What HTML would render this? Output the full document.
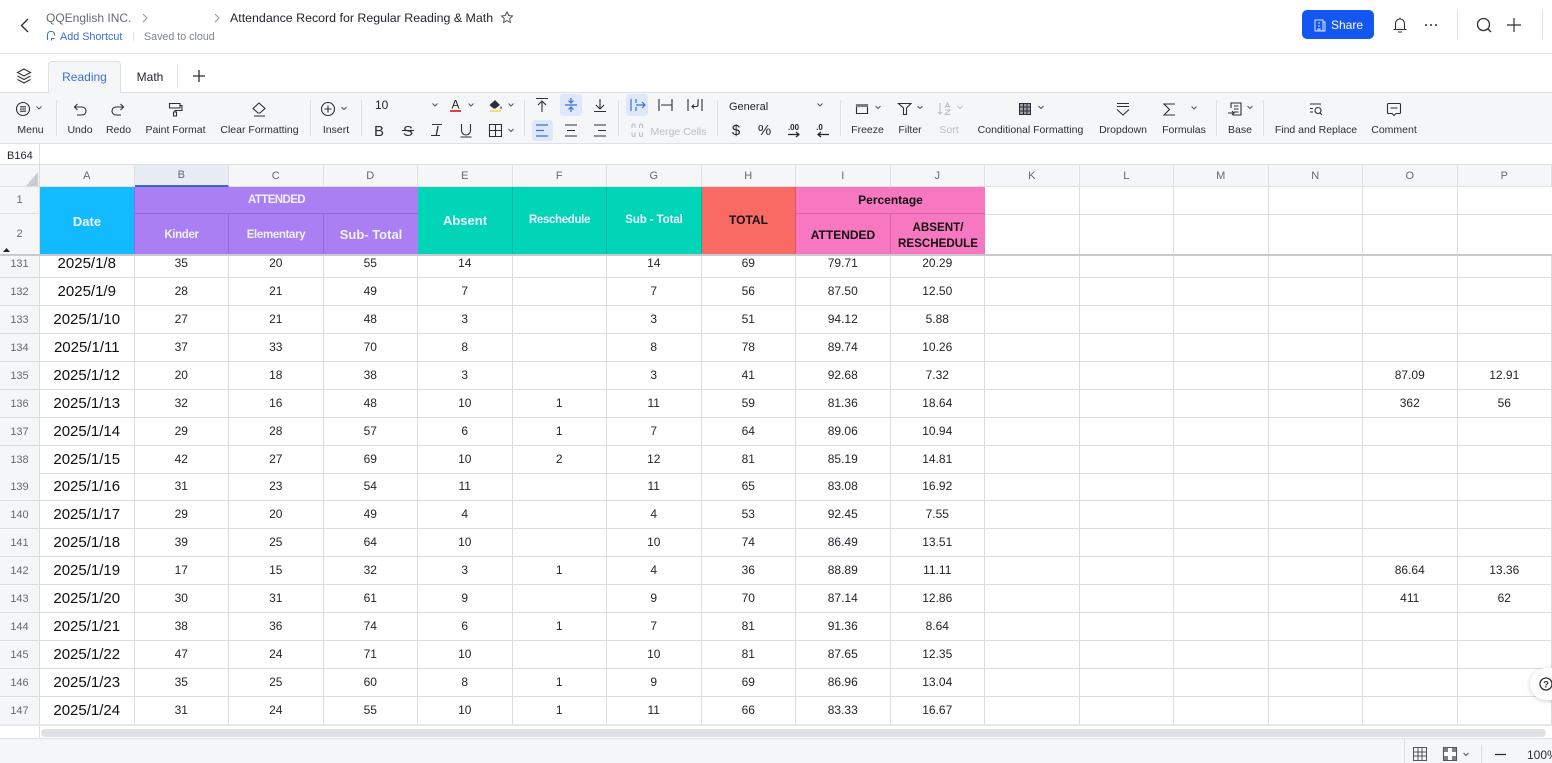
<!DOCTYPE html>
<html lang="en"><head><meta charset="utf-8"><title>Attendance Record</title>
<style>
*{box-sizing:border-box;margin:0;padding:0}
html,body{width:1552px;height:763px;overflow:hidden;background:#fff;font-family:"Liberation Sans",sans-serif}
#chrome{position:absolute;left:0;top:0;z-index:5}
#chrome text{font-family:"Liberation Sans",sans-serif}
.l{font-size:10.500px;fill:#2b2f36;text-anchor:middle}
.g{fill:#bbbfc4}
.ic{fill:none;stroke:#2b2f36;stroke-width:1.1}
.c{fill:none;stroke:#51565d;stroke-width:1}
.b{fill:none;stroke:#3b6fd1;stroke-width:1.2}
.x{fill:none;stroke:#bbbfc4;stroke-width:1.1}
.sep{stroke:#dee0e3;stroke-width:1}
.box{position:absolute}
.flex{display:flex;position:absolute;left:0}
.flex span{display:flex;align-items:center;justify-content:center;flex:none;width:94.5px}
.flex span.n{width:40px}
#colh{top:164px;height:23px;background:#f5f6f7;border-top:1px solid #dee0e3;border-bottom:1px solid #dee0e3;width:1552px}
#colh span{font-size:11px;color:#646a73;border-right:1px solid #dee0e3;height:21px}
#colh span.sel{background:#e8ecf5;border-bottom:2px solid #3b66c4;height:22px;padding-bottom:1px}
#body{position:absolute;left:0;top:256px;width:1552px;height:469px;overflow:hidden}
.r{display:flex;position:absolute;left:0;height:28px;width:1552px;margin-top:-256px;font-size:12px;color:#1f2329}
.r span{display:flex;align-items:center;justify-content:center;flex:none;width:94.5px;height:28px;padding-bottom:1px;border-right:1px solid #dadce0;border-bottom:1px solid #dadce0}
.r span.n{width:40px;background:#f5f6f7;color:#646a73;font-size:11px;padding-bottom:0}
.r span.d{font-size:15px;color:#111;padding-bottom:1px}
.h{position:absolute;display:flex;align-items:center;justify-content:center;text-align:center;font-size:11.500px;letter-spacing:-.35px;font-weight:bold;color:#eef2ff}
.k{color:#111;line-height:16px;font-size:12px;letter-spacing:0}
.rn{position:absolute;left:0;width:39px;text-align:center;font-size:11px;color:#646a73;background:#f5f6f7;border-bottom:1px solid #dee0e3}
.vl{position:absolute;width:1px;background:#dadce0}
</style></head><body>

<div class="box" style="left:0;top:92px;width:1552px;height:52px;background:#f5f6f7;border-top:1px solid #dee0e3;border-bottom:1px solid #dee0e3"></div>
<div class="box" style="left:0;top:53px;width:1552px;height:1px;background:#dee0e3"></div>
<div class="box" style="left:48px;top:61px;width:73px;height:32px;background:#f5f6f7;border:1px solid #dee0e3;border-bottom:none;border-radius:4px 4px 0 0"></div>
<div class="box" style="left:39px;top:144px;width:1px;height:21px;background:#dee0e3"></div>

<svg id="chrome" width="1552" height="144" viewBox="0 0 1552 144" xmlns="http://www.w3.org/2000/svg">
<path d="M28 19l-6.500 6.500 6.500 6.500" fill="none" stroke="#2b2f36" stroke-width="1.400"/>
<text x="46" y="22" font-size="12" fill="#646a73">QQEnglish INC.</text>
<path class="c" d="M143 14l4 4-4 4M215 14l4 4-4 4" style="stroke:#8f959e"/>
<text x="230" y="22" font-size="12.400" fill="#1f2329">Attendance Record for Regular Reading &amp; Math</text>
<path d="M507 12l1.700 3.500 3.800.5-2.800 2.600.7 3.800-3.400-1.800-3.400 1.800.7-3.800-2.800-2.600 3.800-.5z" fill="none" stroke="#51565d" stroke-width="1"/>
<path d="M47.500 40v-5.500a3 3 0 0 1 3-3h1a3 3 0 0 1 3 3v1M54.500 38.500h-3v2" fill="none" stroke="#3b6fd1" stroke-width="1.100"/>
<text x="60" y="40" font-size="10.800" fill="#3b6fd1">Add Shortcut</text>
<path class="sep" d="M133.500 32v9"/>
<text x="144" y="40" font-size="10.700" fill="#7f858e">Saved to cloud</text>

<rect x="1302" y="10" width="72" height="29" rx="5" fill="#1456f0"/>
<path d="M1315 20h8v11h-8zM1323 22h2v9h-2M1318 23h2M1318 26h2M1318 31v-2h2v2" fill="none" stroke="#dce6ff" stroke-width="1"/>
<text x="1331" y="29" font-size="12" fill="#fff" style="font-weight:500">Share</text>
<path class="ic" d="M1393.500 29.500h13M1395.500 29.500v-6a4.500 4.500 0 0 1 9 0v6M1398 32h4M1400 17.500v1.500"/>
<path d="M1425 25h2M1430 25h2M1435 25h2" stroke="#2b2f36" stroke-width="1.600" fill="none"/>
<path class="sep" d="M1457.500 10v29M1542.500 10v29"/>
<circle class="ic" cx="1483.500" cy="24.500" r="6" style="stroke-width:1.300"/><path class="ic" d="M1488 29l3 3" style="stroke-width:1.300"/>
<path class="ic" d="M1514 18v14M1507 25h14" style="stroke-width:1.200"/>

<path class="ic" d="M24 69l-6.500 3.500 6.500 3.500 6.500-3.500zM17.500 76l6.500 3.500 6.500-3.500M17.500 79.500l6.500 3.500 6.500-3.500"/>
<text x="84.500" y="81" font-size="12" fill="#3b6fd1" text-anchor="middle">Reading</text>
<text x="150" y="81" font-size="12" fill="#1f2329" text-anchor="middle">Math</text>
<path class="sep" d="M177.500 65v22"/>
<path class="ic" d="M199 70v12M193 76h12" style="stroke-width:1.300"/>

<path class="sep" d="M56.500 100v36M310.500 100v36M361.500 100v36M524.500 100v36M618.500 100v36M717.500 100v36M840.500 100v36M1216.500 100v36M1263.500 100v36"/>

<text class="l" x="30.500" y="133">Menu</text><text class="l" x="80" y="133">Undo</text><text class="l" x="118.500" y="133">Redo</text>
<text class="l" x="175.500" y="133">Paint Format</text><text class="l" x="259.500" y="133">Clear Formatting</text><text class="l" x="336" y="133">Insert</text>
<text class="l g" x="678.500" y="135">Merge Cells</text>
<text class="l" x="867.500" y="133">Freeze</text><text class="l" x="910" y="133">Filter</text><text class="l g" x="949" y="133">Sort</text>
<text class="l" x="1030.500" y="133">Conditional Formatting</text><text class="l" x="1123" y="133">Dropdown</text><text class="l" x="1184" y="133">Formulas</text>
<text class="l" x="1240" y="133">Base</text><text class="l" x="1316" y="133">Find and Replace</text><text class="l" x="1394" y="133">Comment</text>

<circle class="ic" cx="23" cy="109" r="6.500"/><path class="ic" d="M20 106.800h6M20 109h6M20 111.200h6"/>
<path class="c" d="M36.500 106.500l2.500 2.500 2.500-2.500"/>
<path class="ic" d="M77.500 104l-3 3 3 3M74.500 107h7.500a4 4 0 0 1 0 8h-5"/>
<path class="ic" d="M120.500 104l3 3-3 3M123.500 107h-7.500a4 4 0 0 0 0 8h5"/>
<path class="ic" d="M169.500 103.500h10.500v4.500h-10.500zM180 105.500h2v5h-7v1.500M173.500 112h3v4h-3z"/>
<path class="ic" d="M259 103l6 5.500-5 4.500h-2l-5-4.500zM254 116h11"/>
<circle class="ic" cx="328" cy="109" r="6.500"/><path class="ic" d="M328 105.500v7M324.500 109h7"/>
<path class="c" d="M341.500 107l2.500 2.500 2.500-2.500"/>

<text x="375" y="109" font-size="12" fill="#1f2329">10</text>
<path class="c" d="M432.500 103.500l2.500 2.500 2.500-2.500M468.500 103.500l2.500 2.500 2.500-2.500M508.500 103.500l2.500 2.500 2.500-2.500"/>
<text x="455.500" y="108.500" font-size="12" fill="#1f2329" text-anchor="middle">A</text>
<rect x="450" y="110" width="11" height="2" fill="#e0403a"/>
<path d="M495 100l5 5-4.500 3.500h-2L489.500 105l4-3.500zM501 106l1 2.500h-2z" fill="#2b2f36"/>
<rect x="490" y="110" width="11" height="2" fill="#f2de75"/>

<text x="379" y="136" font-size="15" fill="#2b2f36" text-anchor="middle">B</text>
<text x="408" y="136" font-size="15" fill="#2b2f36" text-anchor="middle">S</text><path class="ic" d="M402 130.500h12"/>
<text x="437" y="135.500" font-size="14" fill="#2b2f36" text-anchor="middle" font-style="italic">I</text><path class="ic" d="M432 124.500h10M431 135.500h9"/>
<path class="ic" d="M461.500 124v6.500a4.500 4.500 0 0 0 9 0V124M460.500 137h11"/>
<path class="ic" d="M489.500 124.500h12v12h-12zM495.500 124.500v12M489.500 130.500h12"/>
<path class="c" d="M508.500 129l2.500 2.500 2.500-2.500"/>

<rect x="560" y="94" width="22" height="22" rx="3" fill="#dfe8fa"/>
<rect x="532" y="120" width="21" height="21" rx="3" fill="#dfe8fa"/>
<rect x="626" y="94" width="22" height="22" rx="3" fill="#dfe8fa"/>
<path class="ic" d="M536 98.500h12M542 112v-11M538 105l4-4 4 4"/>
<path class="b" d="M565 105h12M571 98v5M568.500 100.500l2.500 2.500 2.500-2.500M571 112v-5M568.500 109.500l2.500-2.500 2.500 2.500"/>
<path class="ic" d="M594 111.500h12M600 99v10M596 105l4 4 4-4"/>
<path class="b" d="M536 125h12M536 130.500h8M536 136h12"/>
<path class="ic" d="M565 125h12M567 130.500h8M565 136h12"/>
<path class="ic" d="M594 125h12M598 130.500h8M594 136h12"/>

<path class="b" d="M631 99v12M636 99v4M636 107v4M636 105h9M642 102l3 3-3 3"/>
<path class="ic" d="M659 99v12M672 99v12M661 105h11"/>
<path class="ic" d="M688 99v12M702 99v12M699 100h-1v5a1.500 1.500 0 0 1-1.500 1.500h-4M694 104.500l-2 2 2 2"/>
<path class="x" d="M632 128v-2.500a1.500 1.500 0 0 1 3 0v2.500M639.500 128v-2.500a1.500 1.500 0 0 1 3 0v2.500M632 132.500v2.500a1.500 1.500 0 0 0 3 0v-2.500M639.500 132.500v2.500a1.500 1.500 0 0 0 3 0v-2.500"/>

<text x="729" y="110" font-size="11" fill="#1f2329">General</text>
<path class="c" d="M817.500 103.500l2.500 2.500 2.500-2.500"/>
<text x="736" y="135" font-size="15" fill="#1f2329" text-anchor="middle">$</text>
<text x="764.500" y="135" font-size="15" fill="#1f2329" text-anchor="middle">%</text>
<text x="793.500" y="130" font-size="8" font-weight="bold" fill="#1f2329" text-anchor="middle">.00</text>
<path d="M788 134.500h11M796 132l3 2.500-3 2.500" fill="none" stroke="#1f2329" stroke-width="1.200"/>
<text x="819.500" y="130" font-size="8" font-weight="bold" fill="#1f2329" text-anchor="middle">.0</text>
<path d="M829 134.500h-11M821 132l-3 2.500 3 2.500" fill="none" stroke="#1f2329" stroke-width="1.200"/>

<path class="ic" d="M856.500 104.500h11v9h-11z"/><path d="M856 104h12v3h-12z" fill="#777b82"/>
<path class="c" d="M875.500 106l2.500 2.500 2.500-2.500"/>
<path class="ic" d="M898.500 103.500h12.500l-4.500 4.500v6.500h-3V108z"/>
<path class="c" d="M917.500 106l2.500 2.500 2.500-2.500"/>
<path class="x" d="M940 103v11M938 112l2 2 2-2M945 108l2.500-5 2.500 5M946 106.500h3M945 110h5l-5 4.500h5"/>
<path class="x" d="M957.500 106l2.500 2.500 2.500-2.500"/>
<rect x="1019.500" y="103.500" width="11" height="11" fill="#9a9da3" stroke="#2b2f36"/><path d="M1023.500 103.500v11M1027 103.500v11M1019.500 107h11M1019.500 111h11" fill="none" stroke="#2b2f36" stroke-width="1"/>
<path class="c" d="M1038.500 106l2.500 2.500 2.500-2.500"/>
<path class="ic" d="M1117 103.500h12M1117 106.500h12M1117 109.500l6 5.500 6-5.500"/>
<path class="ic" d="M1175 104h-11l5.500 5.500-5.500 5.500h11"/>
<path class="c" d="M1191.500 106.500l2.500 2.500 2.500-2.500"/>
<path class="ic" d="M1231 108v-5h10v12h-8M1234 106h4.500M1234 109h4.500M1234 112h4.500M1228 113h6M1232 111l2 2-2 2"/>
<path class="c" d="M1247.500 106l2.500 2.500 2.500-2.500"/>
<path class="ic" d="M1310 104h11M1310 108.500h3M1310 112h3"/><circle class="ic" cx="1318" cy="110.500" r="3"/><path class="ic" d="M1320 113l2 2"/>
<path class="ic" d="M1388.500 103.500h11a1 1 0 0 1 1 1v8a1 1 0 0 1-1 1h-3.500l-2 2-2-2h-3.500a1 1 0 0 1-1-1v-8a1 1 0 0 1 1-1zM1390.500 108h7"/>
</svg>

<div class="box" style="left:7px;top:150px;font-size:11px;line-height:12px;color:#1f2329">B164</div>

<div class="flex" id="colh"><span class="n"></span><span>A</span><span class="sel">B</span><span>C</span><span>D</span><span>E</span><span>F</span><span>G</span><span>H</span><span>I</span><span>J</span><span>K</span><span>L</span><span>M</span><span>N</span><span>O</span><span>P</span></div>
<svg class="box" style="left:26px;top:172px" width="12" height="14"><path d="M12 0v14H0z" fill="#c9ccd1"/></svg>

<div id="body">
<div class="r" style="top:250px"><span class="n">131</span><span class="d">2025/1/8</span><span>35</span><span>20</span><span>55</span><span>14</span><span></span><span>14</span><span>69</span><span>79.71</span><span>20.29</span><span></span><span></span><span></span><span></span><span></span><span></span></div>
<div class="r" style="top:278px"><span class="n">132</span><span class="d">2025/1/9</span><span>28</span><span>21</span><span>49</span><span>7</span><span></span><span>7</span><span>56</span><span>87.50</span><span>12.50</span><span></span><span></span><span></span><span></span><span></span><span></span></div>
<div class="r" style="top:306px"><span class="n">133</span><span class="d">2025/1/10</span><span>27</span><span>21</span><span>48</span><span>3</span><span></span><span>3</span><span>51</span><span>94.12</span><span>5.88</span><span></span><span></span><span></span><span></span><span></span><span></span></div>
<div class="r" style="top:334px"><span class="n">134</span><span class="d">2025/1/11</span><span>37</span><span>33</span><span>70</span><span>8</span><span></span><span>8</span><span>78</span><span>89.74</span><span>10.26</span><span></span><span></span><span></span><span></span><span></span><span></span></div>
<div class="r" style="top:362px"><span class="n">135</span><span class="d">2025/1/12</span><span>20</span><span>18</span><span>38</span><span>3</span><span></span><span>3</span><span>41</span><span>92.68</span><span>7.32</span><span></span><span></span><span></span><span></span><span>87.09</span><span>12.91</span></div>
<div class="r" style="top:390px"><span class="n">136</span><span class="d">2025/1/13</span><span>32</span><span>16</span><span>48</span><span>10</span><span>1</span><span>11</span><span>59</span><span>81.36</span><span>18.64</span><span></span><span></span><span></span><span></span><span>362</span><span>56</span></div>
<div class="r" style="top:418px"><span class="n">137</span><span class="d">2025/1/14</span><span>29</span><span>28</span><span>57</span><span>6</span><span>1</span><span>7</span><span>64</span><span>89.06</span><span>10.94</span><span></span><span></span><span></span><span></span><span></span><span></span></div>
<div class="r" style="top:446px"><span class="n">138</span><span class="d">2025/1/15</span><span>42</span><span>27</span><span>69</span><span>10</span><span>2</span><span>12</span><span>81</span><span>85.19</span><span>14.81</span><span></span><span></span><span></span><span></span><span></span><span></span></div>
<div class="r" style="top:473px"><span class="n">139</span><span class="d">2025/1/16</span><span>31</span><span>23</span><span>54</span><span>11</span><span></span><span>11</span><span>65</span><span>83.08</span><span>16.92</span><span></span><span></span><span></span><span></span><span></span><span></span></div>
<div class="r" style="top:501px"><span class="n">140</span><span class="d">2025/1/17</span><span>29</span><span>20</span><span>49</span><span>4</span><span></span><span>4</span><span>53</span><span>92.45</span><span>7.55</span><span></span><span></span><span></span><span></span><span></span><span></span></div>
<div class="r" style="top:529px"><span class="n">141</span><span class="d">2025/1/18</span><span>39</span><span>25</span><span>64</span><span>10</span><span></span><span>10</span><span>74</span><span>86.49</span><span>13.51</span><span></span><span></span><span></span><span></span><span></span><span></span></div>
<div class="r" style="top:557px"><span class="n">142</span><span class="d">2025/1/19</span><span>17</span><span>15</span><span>32</span><span>3</span><span>1</span><span>4</span><span>36</span><span>88.89</span><span>11.11</span><span></span><span></span><span></span><span></span><span>86.64</span><span>13.36</span></div>
<div class="r" style="top:585px"><span class="n">143</span><span class="d">2025/1/20</span><span>30</span><span>31</span><span>61</span><span>9</span><span></span><span>9</span><span>70</span><span>87.14</span><span>12.86</span><span></span><span></span><span></span><span></span><span>411</span><span>62</span></div>
<div class="r" style="top:613px"><span class="n">144</span><span class="d">2025/1/21</span><span>38</span><span>36</span><span>74</span><span>6</span><span>1</span><span>7</span><span>81</span><span>91.36</span><span>8.64</span><span></span><span></span><span></span><span></span><span></span><span></span></div>
<div class="r" style="top:641px"><span class="n">145</span><span class="d">2025/1/22</span><span>47</span><span>24</span><span>71</span><span>10</span><span></span><span>10</span><span>81</span><span>87.65</span><span>12.35</span><span></span><span></span><span></span><span></span><span></span><span></span></div>
<div class="r" style="top:669px"><span class="n">146</span><span class="d">2025/1/23</span><span>35</span><span>25</span><span>60</span><span>8</span><span>1</span><span>9</span><span>69</span><span>86.96</span><span>13.04</span><span></span><span></span><span></span><span></span><span></span><span></span></div>
<div class="r" style="top:697px"><span class="n">147</span><span class="d">2025/1/24</span><span>31</span><span>24</span><span>55</span><span>10</span><span>1</span><span>11</span><span>66</span><span>83.33</span><span>16.67</span><span></span><span></span><span></span><span></span><span></span><span></span></div>
</div>

<div class="rn" style="top:187px;height:27px;line-height:27px">1</div>
<div class="rn" style="top:214px;height:41px;line-height:41px;border-bottom:none">2</div>
<div class="vl" style="left:39px;top:165px;height:90px"></div>
<svg class="box" style="left:3px;top:248px" width="7" height="5"><path d="M3.500 0L7 4H0z" fill="#1f2329"/></svg>

<div class="box" style="left:985px;top:214px;width:567px;height:1px;background:#dadce0"></div>
<div class="vl" style="left:1079px;top:187px;height:68px"></div>
<div class="vl" style="left:1173px;top:187px;height:68px"></div>
<div class="vl" style="left:1268px;top:187px;height:68px"></div>
<div class="vl" style="left:1362px;top:187px;height:68px"></div>
<div class="vl" style="left:1457px;top:187px;height:68px"></div>

<div class="h" style="left:40px;top:187px;width:94px;height:68px;background:#12bbff;font-size:13px;letter-spacing:0">Date</div>
<div class="h" style="left:134px;top:187px;width:284px;height:27px;background:#a97ff3;border-bottom:1px solid #9468dc;border-left:1px solid #9468dc;letter-spacing:-.6px">ATTENDED</div>
<div class="h" style="left:134px;top:214px;width:95px;height:41px;background:#a97ff3;border-left:1px solid #9468dc;border-right:1px solid #9468dc">Kinder</div>
<div class="h" style="left:229px;top:214px;width:95px;height:41px;background:#a97ff3;border-right:1px solid #9468dc">Elementary</div>
<div class="h" style="left:324px;top:214px;width:94px;height:41px;background:#a97ff3;font-size:13px;letter-spacing:0">Sub- Total</div>
<div class="h" style="left:418px;top:187px;width:95px;height:68px;background:#00d5b8;font-size:13px;letter-spacing:0;border-right:1px solid #00b9a0;padding-bottom:2px">Absent</div>
<div class="h" style="left:513px;top:187px;width:94px;height:68px;background:#00d5b8;border-right:1px solid #00b9a0;padding-bottom:2px">Reschedule</div>
<div class="h" style="left:607px;top:187px;width:95px;height:68px;background:#00d5b8;border-right:1px solid #00b9a0;padding-bottom:2px;letter-spacing:-.1px">Sub - Total</div>
<div class="h k" style="left:702px;top:187px;width:94px;height:68px;background:#f96a65;padding-bottom:2px;border-right:1px solid #d95a56">TOTAL</div>
<div class="h k" style="left:796px;top:187px;width:189px;height:27px;background:#f778c0;border-bottom:1px solid #d866a6">Percentage</div>
<div class="h k" style="left:796px;top:214px;width:95px;height:41px;background:#f778c0;border-right:1px solid #d866a6">ATTENDED</div>
<div class="h k" style="left:891px;top:214px;width:94px;height:41px;background:#f778c0;font-size:11.600px;padding-top:2px">ABSENT/<br>RESCHEDULE</div>

<div class="box" style="left:0;top:254px;width:1552px;height:2px;background:#c8cacf"></div>

<div class="box" style="left:0;top:724px;width:1552px;height:2px;background:#e6e7ea"></div>
<div class="box" style="left:39px;top:725px;width:1px;height:13px;background:#dee0e3"></div>
<div class="box" style="left:41px;top:729px;width:1505px;height:8px;border-radius:4px;background:#e0e1e5"></div>
<div class="box" style="left:0;top:738px;width:1552px;height:25px;background:#f5f6f7;border-top:1px solid #dee0e3"></div>

<div class="box" style="left:1530px;top:668px;width:40px;height:32px;border-radius:16px;background:#fff;box-shadow:0 1px 5px rgba(0,0,0,.18)"></div>

<svg class="box" style="left:0;top:660px;z-index:6" width="1552" height="103" viewBox="0 660 1552 103" xmlns="http://www.w3.org/2000/svg">
<circle cx="1546" cy="684" r="6" fill="none" stroke="#2b2f36" stroke-width="1.300"/>
<text x="1546" y="687.500" font-size="9.500" font-weight="bold" fill="#2b2f36" text-anchor="middle" font-family="Liberation Sans">?</text>
<path class="sep" d="M1404.500 739v24M1481.500 745v18"/>
<path d="M1413.500 747.500h13v13h-13zM1418 747.500v13M1422 747.500v13M1413.500 752h13M1413.500 756h13" fill="none" stroke="#51565d" stroke-width="1"/>
<path d="M1443.500 747.500h13v13h-13z" fill="#fff" stroke="#51565d" stroke-width="1.100"/>
<path d="M1444 748h4v4h-4zM1452 748h4v4h-4zM1444 756h4v4h-4zM1452 756h4v4h-4z" fill="#7d8188"/>
<path d="M1463.500 753l2.500 2.500 2.500-2.500" fill="none" stroke="#51565d" stroke-width="1"/>
<path d="M1495 754.500h11" stroke="#2b2f36" stroke-width="1.300" fill="none"/>
<text x="1527" y="759" font-size="12" fill="#2b2f36" font-family="Liberation Sans">100%</text>
</svg>
</body></html>
